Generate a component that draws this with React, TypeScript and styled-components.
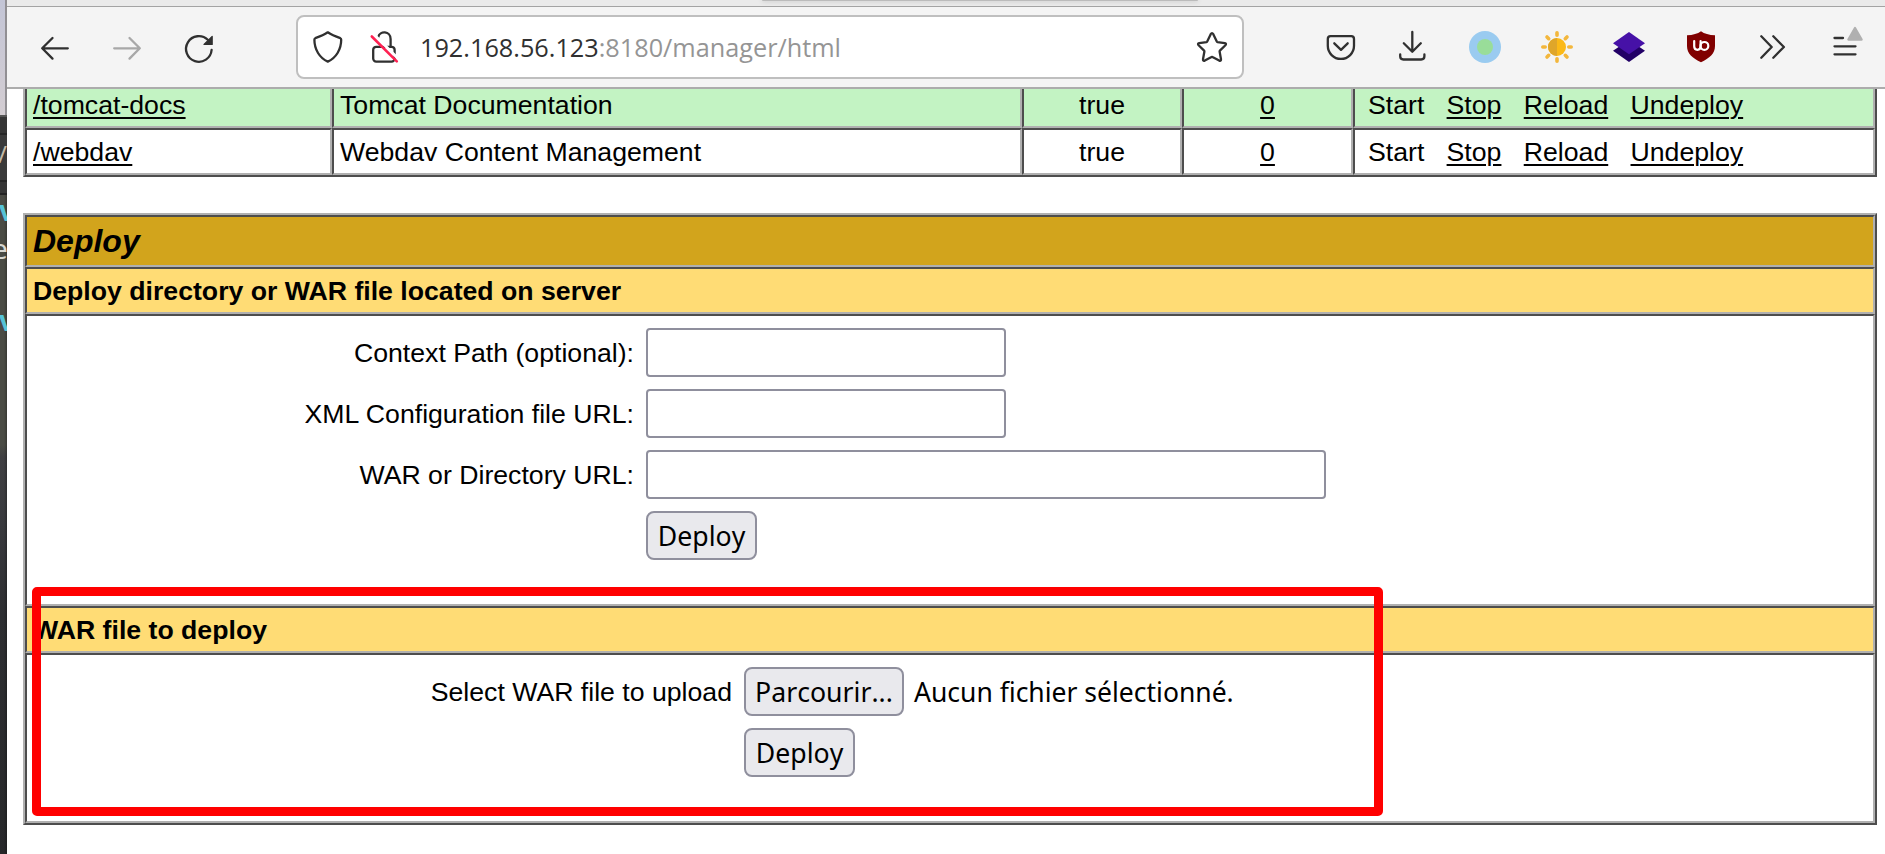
import React from 'react';
import styled, { createGlobalStyle, css } from 'styled-components';

const LIGHT = '#b0b0b0';
const DARK = '#4d4d4d';

const Global = createGlobalStyle`
  html, body { margin: 0; padding: 0; }
  body { width: 1885px; height: 854px; overflow: hidden; background: #fff; }
  * { box-sizing: border-box; }
`;

const Screen = styled.div`
  display: flex;
  position: relative;
  width: 1885px;
  height: 854px;
  overflow: hidden;
  background: #fff;
`;

const Backdrop = styled.div`
  display: flex;
  flex-direction: column;
  flex: none;
  width: 7px;
  height: 854px;
  overflow: hidden;
  font: 28px/30px 'Noto Sans', sans-serif;
`;

const BackLight = styled.div`
  flex: none;
  height: 115px;
  border-right: 2px solid #918f93;
  background: linear-gradient(#c3c5d6, #d3cdd2);
`;

const BackBars = styled.div`
  flex: none;
  height: 80px;
  padding-top: 22px;
  border-top: 2px solid #555;
  background: linear-gradient(#353535 0 16px, #262626 16px 18px, #3a3a3a 18px 63px, #262626 63px 65px, #353535 65px 76px, #222 76px);
  color: #c4b9a6;
  font-size: 24px;
  text-indent: -2px;
`;

const BackEditor = styled.div`
  flex: 1;
  background:
    linear-gradient(90deg, transparent 4px, rgba(0, 0, 0, 0.25)),
    linear-gradient(#4a4b44 0 250px, #3f3f42 262px, #38393d 330px, #2d2e31 420px, #27282a);
`;

const BackGlyph = styled.div<{ $color: string; $gap: number; $indent: number; $bold?: boolean }>`
  height: 30px;
  margin-top: ${(p) => p.$gap}px;
  text-indent: ${(p) => p.$indent}px;
  color: ${(p) => p.$color};
  font-weight: ${(p) => (p.$bold ? 700 : 400)};
  white-space: nowrap;
`;

const Browser = styled.div`
  display: flex;
  flex-direction: column;
  flex: 1;
  min-width: 0;
`;

const TabStrip = styled.div`
  flex: none;
  height: 7px;
  padding-left: 755px;
  overflow: hidden;
  background: #eaeaea;
  border-bottom: 1px solid #a3a3a3;
`;

const ActiveTab = styled.div`
  width: 436px;
  height: 1px;
  background: #bbb;
  border-radius: 0 0 8px 8px;
  box-shadow: 0 0 4px #999;
`;

const Toolbar = styled.div`
  display: flex;
  align-items: center;
  flex: none;
  height: 82px;
  padding: 0 20px 0 30px;
  background: #f4f4f4;
  border-bottom: 2px solid #acacac;
`;

const ToolIcon = styled.svg<{ $after?: number; $muted?: boolean }>`
  display: block;
  flex: none;
  width: 36px;
  height: 36px;
  margin-top: 2px;
  margin-right: ${(p) => p.$after ?? 36}px;
  overflow: visible;
  fill: none;
  stroke: ${(p) => (p.$muted ? '#a8a8a8' : '#303030')};
  stroke-width: 2.3;
  stroke-linecap: round;
  stroke-linejoin: round;
`;

const AddressBar = styled.div`
  display: flex;
  align-items: center;
  flex: none;
  width: 948px;
  height: 64px;
  margin-right: 79px;
  padding: 0 12px;
  background: #fff;
  border: 2px solid #bfbfbf;
  border-radius: 8px;
`;

const Address = styled.div`
  flex: 1;
  font: 25.25px/36px 'Open Sans', sans-serif;
  color: #959595;
`;

const Host = styled.span`
  color: #303030;
`;

const Page = styled.main`
  display: flex;
  flex-direction: column;
  gap: 36px;
  flex: 1;
  min-height: 0;
  padding: 0 8px 0 16px;
  overflow: hidden;
  font: 26.667px/30px 'Liberation Sans', Arial, sans-serif;
  color: #000;
`;

const Table = styled.section<{ $open?: boolean }>`
  border: 2px solid;
  border-color: ${LIGHT} ${DARK} ${DARK} ${LIGHT};
  ${(p) => p.$open && css`border-top: 0;`}
`;

const Row = styled.div<{ $clipped?: boolean }>`
  display: grid;
  grid-template-columns: 307px 690px 160px 171px 1fr;
  height: ${(p) => (p.$clipped ? 39 : 47)}px;
`;

const Cell = styled.div<{ $bg?: string; $center?: boolean; $clipped?: boolean; $left?: number }>`
  display: flex;
  align-items: center;
  justify-content: ${(p) => (p.$center ? 'center' : 'flex-start')};
  padding-left: ${(p) => (p.$center ? 0 : p.$left ?? 6)}px;
  background: ${(p) => p.$bg ?? '#fff'};
  border: 2px solid;
  border-color: ${DARK} ${LIGHT} ${LIGHT} ${DARK};
  ${(p) => p.$clipped && css`
    border-top: 0;
    padding-bottom: 6px;
  `}
`;

const Link = styled.a`
  text-decoration: underline;
  text-decoration-thickness: 2px;
  text-underline-offset: 3px;
`;

const Actions = styled.div`
  display: flex;
  gap: 22.3px;
`;

const Band = styled.h2<{ $title?: boolean }>`
  display: flex;
  align-items: center;
  height: ${(p) => (p.$title ? 52 : 47)}px;
  margin: 0;
  padding: 0 6px ${(p) => (p.$title ? 1 : 0)}px;
  border: 2px solid;
  border-color: ${DARK} ${LIGHT} ${LIGHT} ${DARK};
  background: ${(p) => (p.$title ? '#d2a41c' : '#ffdc75')};
  font-size: ${(p) => (p.$title ? 32 : 26.667)}px;
  font-style: ${(p) => (p.$title ? 'italic' : 'normal')};
  line-height: 30px;
`;

const FormPanel = styled.form<{ $height: number; $label: number }>`
  display: grid;
  grid-template-columns: ${(p) => p.$label}px 1fr;
  grid-auto-rows: 49px;
  row-gap: 12px;
  column-gap: 12px;
  align-items: center;
  height: ${(p) => p.$height}px;
  padding-top: 12px;
  border: 2px solid;
  border-color: ${DARK} ${LIGHT} ${LIGHT} ${DARK};
`;

const Label = styled.label`
  text-align: right;
  white-space: nowrap;
`;

const Field = styled.input<{ $width: number }>`
  width: ${(p) => p.$width}px;
  height: 49px;
  margin: 0;
  background: #fff;
  border: 2px solid #8f8f9d;
  border-radius: 4px;
`;

const Button = styled.button<{ $width: number }>`
  width: ${(p) => p.$width}px;
  height: 49px;
  padding: 0;
  background: #e9e9ed;
  border: 2px solid #8f8f9d;
  border-radius: 8px;
  color: #000;
  font: 26.667px/36px 'Noto Sans', sans-serif;
  font-kerning: none;
`;

const FilePicker = styled.div`
  display: flex;
  align-items: center;
  gap: 10px;
  font: 26.5px/36px 'Noto Sans', sans-serif;
`;

const Highlight = styled.div`
  position: absolute;
  left: 32px;
  top: 587px;
  width: 1351px;
  height: 229px;
  border: 9px solid #f00;
  border-radius: 5px;
  pointer-events: none;
`;

const apps = [
  { path: '/tomcat-docs', name: 'Tomcat Documentation', bg: '#c3f3c3', clipped: true },
  { path: '/webdav', name: 'Webdav Content Management', bg: '#fff', clipped: false },
];

const BrowserToolbar = () => (
  <Toolbar>
    <ToolIcon viewBox="0 0 36 36">
      <path d="M30.800 18.300H5.200M15.500 8 5.200 18.300l10.300 10.300" />
    </ToolIcon>
    <ToolIcon viewBox="0 0 36 36" $muted>
      <path d="M5.200 18.300h25.600M20.500 8l10.300 10.300-10.300 10.300" />
    </ToolIcon>
    <ToolIcon viewBox="0 0 36 36" $after={79}>
      <path d="M26.800 9.800A12.800 12.800 0 1 0 30.600 20" />
      <path d="M31.200 6.300V14.500H23z" fill="#303030" strokeWidth="1.200" />
    </ToolIcon>
    <AddressBar>
      <ToolIcon viewBox="0 0 36 36" $after={20}>
        <path d="M17.800 2.300C22 5.300 26.500 6.900 30.300 8.200Q31.200 8.600 31.200 9.800C31.200 19.500 26 28 17.800 31.600C9.600 28 4.400 19.500 4.400 9.800Q4.400 8.600 5.300 8.200C9.100 6.900 13.600 5.300 17.800 2.300z" />
      </ToolIcon>
      <ToolIcon viewBox="0 0 36 36" $after={18}>
        <rect x="7.200" y="16.800" width="21.400" height="14.800" rx="3" />
        <path d="M12.300 7C13.600.5 24.600.5 24.600 9v7.500" />
        <path d="M8 4.500 32.500 29" stroke="#fff" strokeWidth="3" />
        <path d="M5.800 6.500 30.800 31.400" stroke="#ff2152" strokeWidth="2.600" />
      </ToolIcon>
      <Address><Host>192.168.56.123</Host>:8180/manager/html</Address>
      <ToolIcon viewBox="0 0 36 36" $after={0}>
        <path d="M16.700 4.200Q18 2.200 19.300 4.200L22.800 11.600Q23 12 23.500 12.100L30.800 13.100Q32.800 13.500 31.400 15.200L25.900 20.600Q25.500 21 25.600 21.500L27 29.200Q27.200 31.500 25.200 30.600L18.500 27Q18 26.700 17.500 27L10.800 30.600Q8.800 31.500 9 29.200L10.400 21.500Q10.500 21 10.100 20.600L4.600 15.200Q3.200 13.500 5.200 13.100L12.500 12.100Q13 12 13.200 11.600z" />
      </ToolIcon>
    </AddressBar>
    <ToolIcon viewBox="0 0 36 36">
      <path d="M7.500 6.200h20.800q2.700 0 2.700 2.700v6.900a13.100 13.100 0 0 1-26.200 0V8.900q0-2.700 2.700-2.700zM11.300 13.300l6.700 6.500 6.700-6.500" />
    </ToolIcon>
    <ToolIcon viewBox="0 0 36 36">
      <path d="M17.300 2v19.500M8.800 13.200l8.500 8.500 8.500-8.500M5.200 24.500v1.800q0 3.200 3.200 3.200h17.800q3.200 0 3.200-3.200v-1.800" />
    </ToolIcon>
    <ToolIcon viewBox="0 0 36 36">
      <circle cx="18" cy="17" r="16" fill="#9acbf0" stroke="none" />
      <circle cx="18" cy="17" r="8" fill="#99dd99" stroke="none" />
    </ToolIcon>
    <ToolIcon viewBox="0 0 36 36">
      <circle cx="18" cy="17" r="9" fill="#fbb917" stroke="none" />
      <path d="M18 8a9 9 0 0 0 0 18z" fill="#dfa62a" stroke="none" />
      <g stroke="#f3b73c" strokeWidth="3.600">
        <path d="M18 2.800v2.400M18 28.800v2.400M3.800 17h2.400M29.800 17h2.400M8 7l1.700 1.700M26.300 25.300 28 27M28 7l-1.700 1.700M9.700 25.300 8 27" />
      </g>
    </ToolIcon>
    <ToolIcon viewBox="0 0 36 36">
      <path d="M2 20.700 18 10l16 10.700L18 32z" fill="#220066" stroke="none" />
      <path d="M2 13.300 18 2l16 11.300L18 24.300z" fill="#4611a7" stroke="none" />
    </ToolIcon>
    <ToolIcon viewBox="0 0 36 36">
      <path d="M18 1.300Q23 5 32 5.300V16c0 8-5.500 12-14 16.300C9.500 28 4 24 4 16V5.300Q13 5 18 1.300z" fill="#800000" stroke="none" />
      <path d="M11.200 11v5.300q0 3.500 3.200 3.500t3.200-3.500V11" stroke="#fff" strokeWidth="2.200" />
      <circle cx="21.400" cy="15.900" r="3.900" stroke="#fff" strokeWidth="2.200" />
    </ToolIcon>
    <ToolIcon viewBox="0 0 36 36">
      <path d="M6.300 6.300 16.700 17 6.300 27.700M18.300 6.300 28.900 17 18.300 27.700" />
    </ToolIcon>
    <ToolIcon viewBox="0 0 36 36" $after={0}>
      <path d="M7.500 8h8.500M7.500 16.300h21M7.500 24.300h21" />
      <path d="M28 -2 34.600 9.500H21.400z" fill="#b0b0b0" stroke="#b0b0b0" />
    </ToolIcon>
  </Toolbar>
);

export default function App() {
  return (
    <>
      <Global />
      <Screen>
        <Backdrop>
          <BackLight />
          <BackBars>/</BackBars>
          <BackEditor>
            <BackGlyph $color="#56c3d6" $gap={0} $indent={-1} $bold>v</BackGlyph>
            <BackGlyph $color="#d6d6d0" $gap={8} $indent={-8}>e</BackGlyph>
            <BackGlyph $color="#56c3d6" $gap={42} $indent={-1} $bold>v</BackGlyph>
          </BackEditor>
        </Backdrop>
        <Browser>
          <TabStrip><ActiveTab /></TabStrip>
          <BrowserToolbar />
          <Page>
            <Table $open>
              {apps.map((a) => (
                <Row key={a.path} $clipped={a.clipped}>
                  <Cell $bg={a.bg} $clipped={a.clipped}><Link>{a.path}</Link></Cell>
                  <Cell $bg={a.bg} $clipped={a.clipped}>{a.name}</Cell>
                  <Cell $bg={a.bg} $clipped={a.clipped} $center>true</Cell>
                  <Cell $bg={a.bg} $clipped={a.clipped} $center><Link>0</Link></Cell>
                  <Cell $bg={a.bg} $clipped={a.clipped} $left={13}>
                    <Actions>
                      <span>Start</span>
                      <Link>Stop</Link>
                      <Link>Reload</Link>
                      <Link>Undeploy</Link>
                    </Actions>
                  </Cell>
                </Row>
              ))}
            </Table>
            <Table>
              <Band $title>Deploy</Band>
              <Band>Deploy directory or WAR file located on server</Band>
              <FormPanel $height={292} $label={607}>
                <Label>Context Path (optional):</Label>
                <Field $width={360} />
                <Label>XML Configuration file URL:</Label>
                <Field $width={360} />
                <Label>WAR or Directory URL:</Label>
                <Field $width={680} />
                <span />
                <Button type="button" $width={111}>Deploy</Button>
              </FormPanel>
              <Band>WAR file to deploy</Band>
              <FormPanel $height={170} $label={705}>
                <Label>Select WAR file to upload</Label>
                <FilePicker>
                  <Button type="button" $width={160}>Parcourir...</Button>
                  <span>Aucun fichier sélectionné.</span>
                </FilePicker>
                <span />
                <Button type="button" $width={111}>Deploy</Button>
              </FormPanel>
            </Table>
          </Page>
        </Browser>
        <Highlight />
      </Screen>
    </>
  );
}
